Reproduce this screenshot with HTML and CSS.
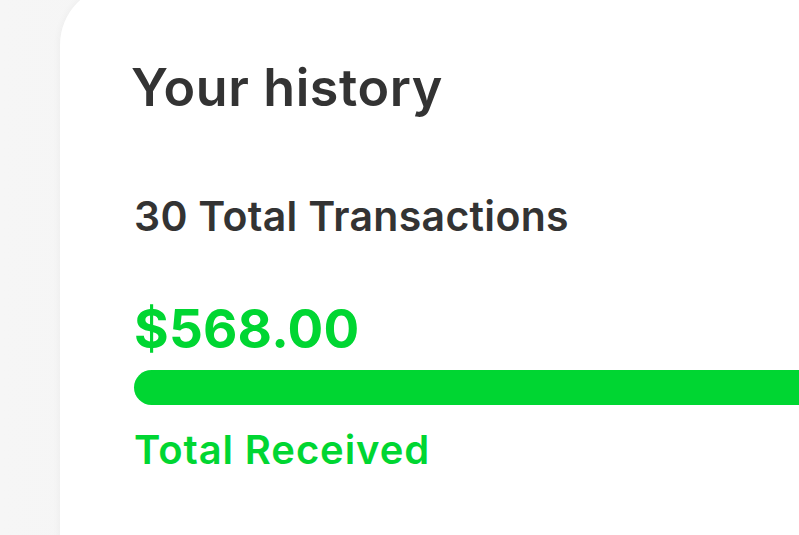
FILE: index.html
```html
<!DOCTYPE html>
<html>
<head>
<meta charset="utf-8">
<link rel="stylesheet" href="styles.css">
</head>
<body>
<div class="page">
  <div class="card">
    <h1 class="title">Your history</h1>
    <div class="count">30 Total Transactions</div>
    <div class="amount">$568.00</div>
    <div class="bar"></div>
    <div class="label">Total Received</div>
  </div>
</div>
</body>
</html>
```
FILE: styles.css
```css
html, body {
  margin: 0;
  padding: 0;
  height: 100%;
  overflow: hidden;
}
body {
  background: linear-gradient(90deg, #f6f6f6 0%, #f1f1f1 90%, #eeeeee 100%);
  font-family: Inter, "Noto Sans", sans-serif;
}
.page {
  padding-left: 60px;
  height: 100%;
}
.card {
  background: #ffffff;
  margin-top: -15px;
  height: 560px;
  border-top-left-radius: 60px;
  box-shadow: -2px 0 6px rgba(0, 0, 0, 0.03);
  padding: 73px 0 0 74px;
  box-sizing: border-box;
}
.title {
  margin: 0 0 0 -3px;
  font-size: 52px;
  font-weight: 600;
  line-height: 60px;
  color: #333333;
  letter-spacing: 0.6px;
}
.count {
  margin-top: 74px;
  font-size: 41px;
  font-weight: 600;
  line-height: 48px;
  color: #333333;
  letter-spacing: 0.3px;
}
.amount {
  margin-top: 58.7px;
  font-size: 53px;
  font-weight: 700;
  line-height: 60px;
  color: #00d632;
  letter-spacing: 0.2px;
}
.bar {
  height: 35px;
  border-radius: 17.5px 0 0 17.5px;
  background: #00d632;
  margin-top: 11.3px;
}
.label {
  margin-top: 21.5px;
  font-size: 40px;
  font-weight: 600;
  line-height: 48px;
  color: #00d632;
  letter-spacing: 0.9px;
}
```
